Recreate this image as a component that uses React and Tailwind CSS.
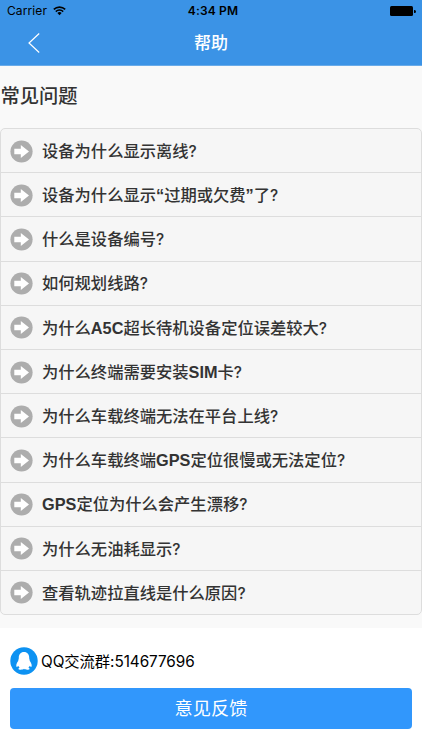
import { Fragment } from "react";

const questions = [
  "设备为什么显示离线?",
  "设备为什么显示“过期或欠费”了?",
  "什么是设备编号?",
  "如何规划线路?",
  "为什么A5C超长待机设备定位误差较大?",
  "为什么终端需要安装SIM卡?",
  "为什么车载终端无法在平台上线?",
  "为什么车载终端GPS定位很慢或无法定位?",
  "GPS定位为什么会产生漂移?",
  "为什么无油耗显示?",
  "查看轨迹拉直线是什么原因?",
];

// latin letters, digits and quotes are set heavier than the chinese text
function MixedText({ text }) {
  return text.split(/([A-Za-z0-9“”]+|\?)/).map((part, i) => {
    if (part === "?") {
      return (
        <span key={i} className="font-['Inter'] font-medium text-[15.5px]">
          ?
        </span>
      );
    }
    return i % 2 ? (
      <span key={i} className="font-bold">
        {part}
      </span>
    ) : (
      <Fragment key={i}>{part}</Fragment>
    );
  });
}

function ArrowIcon() {
  return (
    <svg viewBox="0 0 23 23" className="w-[23px] h-[23px] shrink-0">
      <circle cx="11.5" cy="11.5" r="11.1" fill="#adadad" />
      <path d="M4.3 8.7h6.5V5l8.2 6.5-8.2 6.5v-3.7H4.3z" fill="#fff" />
    </svg>
  );
}

function QQIcon() {
  return (
    <svg viewBox="0 0 28 28" className="w-7 h-7 shrink-0">
      <circle cx="14" cy="14" r="13.7" fill="#0d92f2" />
      <path
        d="M14 5c-3.4 0-5.2 2.5-5.2 5.7 0 .8-.1 1.2-.3 1.8-.2.5-.2.9-.3 1.4-1 1.4-1.9 2.9-1.9 4.5 0 .9.3 1.5.6 1.5.5 0 .9-.6 1.3-1.2.3.8.8 1.5 1.4 2-.8.3-1.2.6-1.2 1 0 .7 1 1 2.4 1s2.6-.3 3.2-.9c.6.6 1.8.9 3.2.9s2.4-.3 2.4-1c0-.4-.4-.7-1.2-1 .6-.5 1.1-1.2 1.4-2 .4.6.8 1.2 1.3 1.2.3 0 .6-.6.6-1.5 0-1.6-.9-3.1-1.9-4.5-.1-.5-.1-.9-.3-1.4-.2-.6-.3-1-.3-1.8C19.2 7.500 17.4 5 14 5z"
        fill="#fff"
      />
    </svg>
  );
}

function StatusBar() {
  return (
    <div className="grid grid-cols-3 items-center h-[22px] pl-[7px] pr-[6px] text-black font-['Inter','Noto_Sans_CJK_SC',sans-serif]">
      <div className="flex items-center gap-[6px]">
        <span className="text-[12px] leading-none tracking-[0.1px]">
          Carrier
        </span>
        <svg viewBox="0 0 13 10" className="w-[13px] h-[10px]" fill="none" stroke="#000">
          <path d="M.8 3.4a8.2 8.2 0 0 1 11.4 0" strokeWidth="1.6" />
          <path d="M2.8 5.6a5.3 5.3 0 0 1 7.4 0" strokeWidth="1.5" />
          <path d="M6.5 9.2 4.4 7.1a3 3 0 0 1 4.2 0z" fill="#000" stroke="none" />
        </svg>
      </div>
      <span className="pl-[3px] text-center text-[12px] leading-none font-semibold tracking-[0.15px]">
        4:34 PM
      </span>
      <div className="flex justify-end items-center gap-px">
        <div className="w-[23px] h-[10px] rounded-[1.5px] bg-black" />
        <div className="w-[1.5px] h-[3px] rounded-r-sm bg-black" />
      </div>
    </div>
  );
}

export default function App() {
  return (
    <div className="w-[422px] h-[750px] flex flex-col overflow-hidden bg-white font-['Liberation_Sans','Noto_Sans_CJK_SC',sans-serif]">
      <header className="h-[66px] shrink-0 bg-[#3b93e6] border-b border-[#69abe9]">
        <StatusBar />
        <div className="grid grid-cols-3 items-center h-[42px] px-[28px]">
          <svg viewBox="0 0 12 20" className="w-3 h-5" fill="none" stroke="#fff" strokeWidth="1.2">
            <path d="M11.2.5 1 10l10.2 9.5" />
          </svg>
          <h1 className="text-center text-[17px] leading-none font-medium text-white">
            帮助
          </h1>
        </div>
      </header>

      <main className="h-[562px] shrink-0 bg-[#f9f9f9]">
        <h2 className="h-[62px] flex items-center pl-[0.5px] text-[19.3px] font-medium text-[#333]">
          常见问题
        </h2>
        <ul className="h-[487px] flex flex-col bg-[#f6f6f6] border border-[#dddddd] rounded-[5px] divide-y divide-[#dddddd]">
          {questions.map((question) => (
            <li key={question} className="flex-1 flex items-center pt-px pl-[9px]">
              <ArrowIcon />
              <span className="ml-[9px] text-[16.3px] leading-none font-medium text-[#333]">
                <MixedText text={question} />
              </span>
            </li>
          ))}
        </ul>
      </main>

      <footer className="px-[10px] pt-[19px]">
        <div className="flex items-center h-7 gap-[3px] text-[15.3px] text-black font-['Inter','Noto_Sans_CJK_SC',sans-serif]">
          <QQIcon />
          <span className="pt-[2px] tracking-[-0.05px]">QQ交流群:514677696</span>
        </div>
        <button className="mt-[13px] w-[402px] h-[41px] pt-[2px] rounded-[4px] bg-[#3197fc] text-white text-[18.2px]">
          意见反馈
        </button>
      </footer>
    </div>
  );
}
